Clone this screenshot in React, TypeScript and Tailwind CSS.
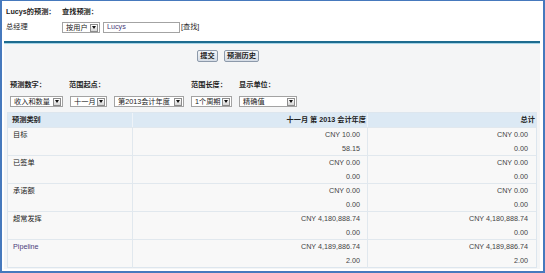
import React from "react";

function Select({ label, className }: { label: string; className: string }) {
  return (
    <div
      className={`flex h-[11px] items-center border border-[#a3a3a3] bg-white pl-[3px] ${className}`}
    >
      <span className="leading-none text-[#222]">{label}</span>
      <span className="ml-auto mr-[1px] flex h-[8px] w-[8px] items-center justify-center border border-[#8c8c8c] bg-gradient-to-b from-white to-[#d6d6d6]">
        <span className="h-0 w-0 border-x-[2px] border-t-[3px] border-x-transparent border-t-[#111]"></span>
      </span>
    </div>
  );
}

const rows = [
  { name: "目标", month: ["CNY 10.00", "58.15"], total: ["CNY 0.00", "0.00"] },
  { name: "已签单", month: ["CNY 0.00", "0.00"], total: ["CNY 0.00", "0.00"] },
  { name: "承诺额", month: ["CNY 0.00", "0.00"], total: ["CNY 0.00", "0.00"] },
  {
    name: "超常发挥",
    month: ["CNY 4,180,888.74", "0.00"],
    total: ["CNY 4,180,888.74", "0.00"],
  },
  {
    name: "Pipeline",
    month: ["CNY 4,189,886.74", "2.00"],
    total: ["CNY 4,189,886.74", "2.00"],
    link: true,
  },
];

export default function App() {
  return (
    <div className="flex h-[273px] w-[545px] flex-col border-x-2 border-t border-b-2 border-[#4679bd] bg-white font-['Liberation_Sans','Noto_Sans_CJK_SC',sans-serif] text-[7.2px] text-[#222]">
      {/* search header */}
      <div className="pl-[4px] pt-[6px]">
        <div className="flex h-[11px] items-center font-bold">
          <span className="w-[56px]">Lucys的预测：</span>
          <span>查找预测：</span>
        </div>
        <div className="mt-[4px] flex h-[11px] items-center">
          <span className="w-[56px]">总经理</span>
          <Select label="按用户" className="w-[38px]" />
          <div className="ml-[3px] flex h-[11px] w-[77px] items-center border border-[#a3a3a3] bg-white pl-[3px] text-[#4b3c7a]">
            Lucys
          </div>
          <span className="ml-[1px]">[查找]</span>
        </div>
      </div>
      {/* divider */}
      <div className="ml-[2px] mr-[3px] mt-[8px]">
        <div className="h-[2px] bg-[#1d6b8f]"></div>
        <div className="h-[1px] bg-[#a6d4e6]"></div>
      </div>
      {/* panel */}
      <div className="mb-[2px] ml-[2px] mr-[3px] flex-1 bg-[#f4f5f6]">
        <div className="flex h-[12px] gap-[6px] pl-[193px] mt-[6px]">
          <button className="w-[21px] rounded-[2px] border border-[#8c99aa] bg-gradient-to-b from-[#f3f5f8] to-[#d5dce6] font-bold leading-none text-[#222]">
            提交
          </button>
          <button className="w-[35px] rounded-[2px] border border-[#8c99aa] bg-gradient-to-b from-[#f3f5f8] to-[#d5dce6] font-bold leading-none text-[#222]">
            预测历史
          </button>
        </div>
        {/* filters */}
        <div className="mt-[18px] flex pl-[6px]">
          <div className="w-[59px]">
            <div className="flex h-[10px] items-center font-bold">预测数字：</div>
            <Select label="收入和数量" className="mt-[6px] w-[53px]" />
          </div>
          <div className="w-[122px]">
            <div className="flex h-[10px] items-center font-bold">范围起点：</div>
            <div className="mt-[6px] flex gap-[7px] pl-[1px]">
              <Select label="十一月" className="w-[37px]" />
              <Select label="第2013会计年度" className="w-[70px]" />
            </div>
          </div>
          <div className="w-[48px]">
            <div className="flex h-[10px] items-center font-bold">范围长度：</div>
            <Select label="1个周期" className="mt-[6px] w-[41px]" />
          </div>
          <div>
            <div className="flex h-[10px] items-center font-bold">显示单位：</div>
            <Select label="精确值" className="mt-[6px] w-[58px]" />
          </div>
        </div>
        {/* table */}
        <div className="mx-[3px] mt-[5px] border border-[#dde6ee] bg-[#f8f8f8]">
          <div className="grid h-[14px] grid-cols-[125px_235px_1fr] bg-[#dce9f4] font-bold">
            <div className="flex items-center border-r border-[#eef3f8] pl-[4px]">预测类别</div>
            <div className="flex items-center justify-end border-r border-[#eef3f8] pr-[1px]">
              十一月 第 2013 会计年度
            </div>
            <div className="flex items-center justify-end pr-[1px]">总计</div>
          </div>
          {rows.map((r, i) => (
            <div
              key={`forecast/row/${i}`}
              className="grid h-[28px] grid-cols-[125px_235px_1fr] border-t border-[#e1e8ee] leading-[14px]"
            >
              <div className={`border-r border-[#e1e8ee] pl-[5px] ${r.link ? "text-[#4b3c7a]" : "text-[#222]"}`}>
                {r.name}
              </div>
              <div className="border-r border-[#e1e8ee] pr-[7px] text-right text-[#444]">
                <div>{r.month[0]}</div>
                <div>{r.month[1]}</div>
              </div>
              <div className="pr-[8px] text-right text-[#444]">
                <div>{r.total[0]}</div>
                <div>{r.total[1]}</div>
              </div>
            </div>
          ))}
        </div>
      </div>
    </div>
  );
}
